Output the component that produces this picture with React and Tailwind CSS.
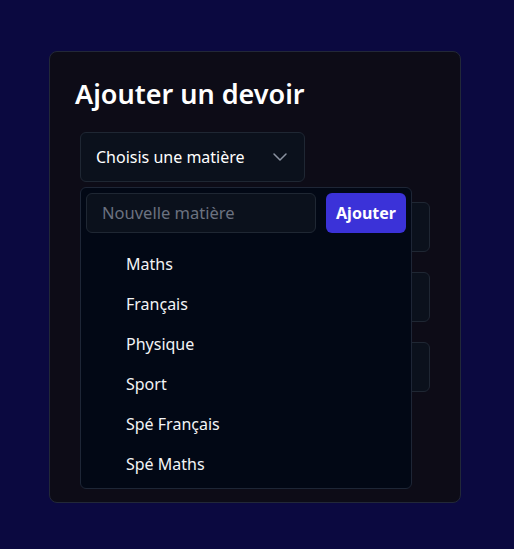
import React from "react";

export default function App() {
  const items = ["Maths", "Français", "Physique", "Sport", "Spé Français", "Spé Maths"];
  return (
    <div
      className="min-h-screen w-full bg-[#0b0940] pt-[51px] pl-[49px]"
      style={{ fontFamily: '"Noto Sans", "Open Sans", sans-serif' }}
    >
      <div className="w-[412px] h-[452px] rounded-lg border border-[#222838] bg-[#0d0c17] px-[25px] pt-[24px]">
        <h1 className="text-[27px] leading-[36px] font-semibold text-white">Ajouter un devoir</h1>
        <div className="relative mt-[20px] ml-[5px] flex flex-col gap-[20px]">
          <button className="flex h-[50px] w-[225px] items-center justify-between rounded-md border border-[#1f2733] bg-[#0b111c] pl-[15px] pr-[12px] text-[16px] text-white">
            <span>Choisis une matière</span>
            <svg width="24" height="24" viewBox="0 0 24 24" fill="none" stroke="#8b93a1" strokeWidth="1.5" strokeLinecap="round" strokeLinejoin="round">
              <path d="m6 9 6 6 6-6" />
            </svg>
          </button>
          <div className="h-[50px] w-[350px] rounded-md border border-[#1f2733] bg-[#0b111c]" />
          <div className="h-[50px] w-[350px] rounded-md border border-[#1f2733] bg-[#0b111c]" />
          <div className="h-[50px] w-[350px] rounded-md border border-[#1f2733] bg-[#0b111c]" />

          <div className="absolute left-0 top-[55px] w-[332px] h-[302px] rounded-md border border-[#1e2636] bg-[#020815] p-[5px]">
            <div className="flex items-center gap-[10px]">
              <div className="flex h-[40px] w-[230px] items-center rounded-md border border-[#1f2733] bg-[#0b111c] px-[15px] text-[16.5px] text-[#6b7280]">
                Nouvelle matière
              </div>
              <button className="h-[40px] w-[80px] rounded-md bg-[#3b32d8] text-[16px] font-bold text-white">
                Ajouter
              </button>
            </div>
            <ul className="mt-[11px]">
              {items.map((it) => (
                <li key={it} className="flex h-[40px] items-center pl-[40px] text-[16px] text-[#f3f4f6]">
                  {it}
                </li>
              ))}
            </ul>
          </div>
        </div>
      </div>
    </div>
  );
}
